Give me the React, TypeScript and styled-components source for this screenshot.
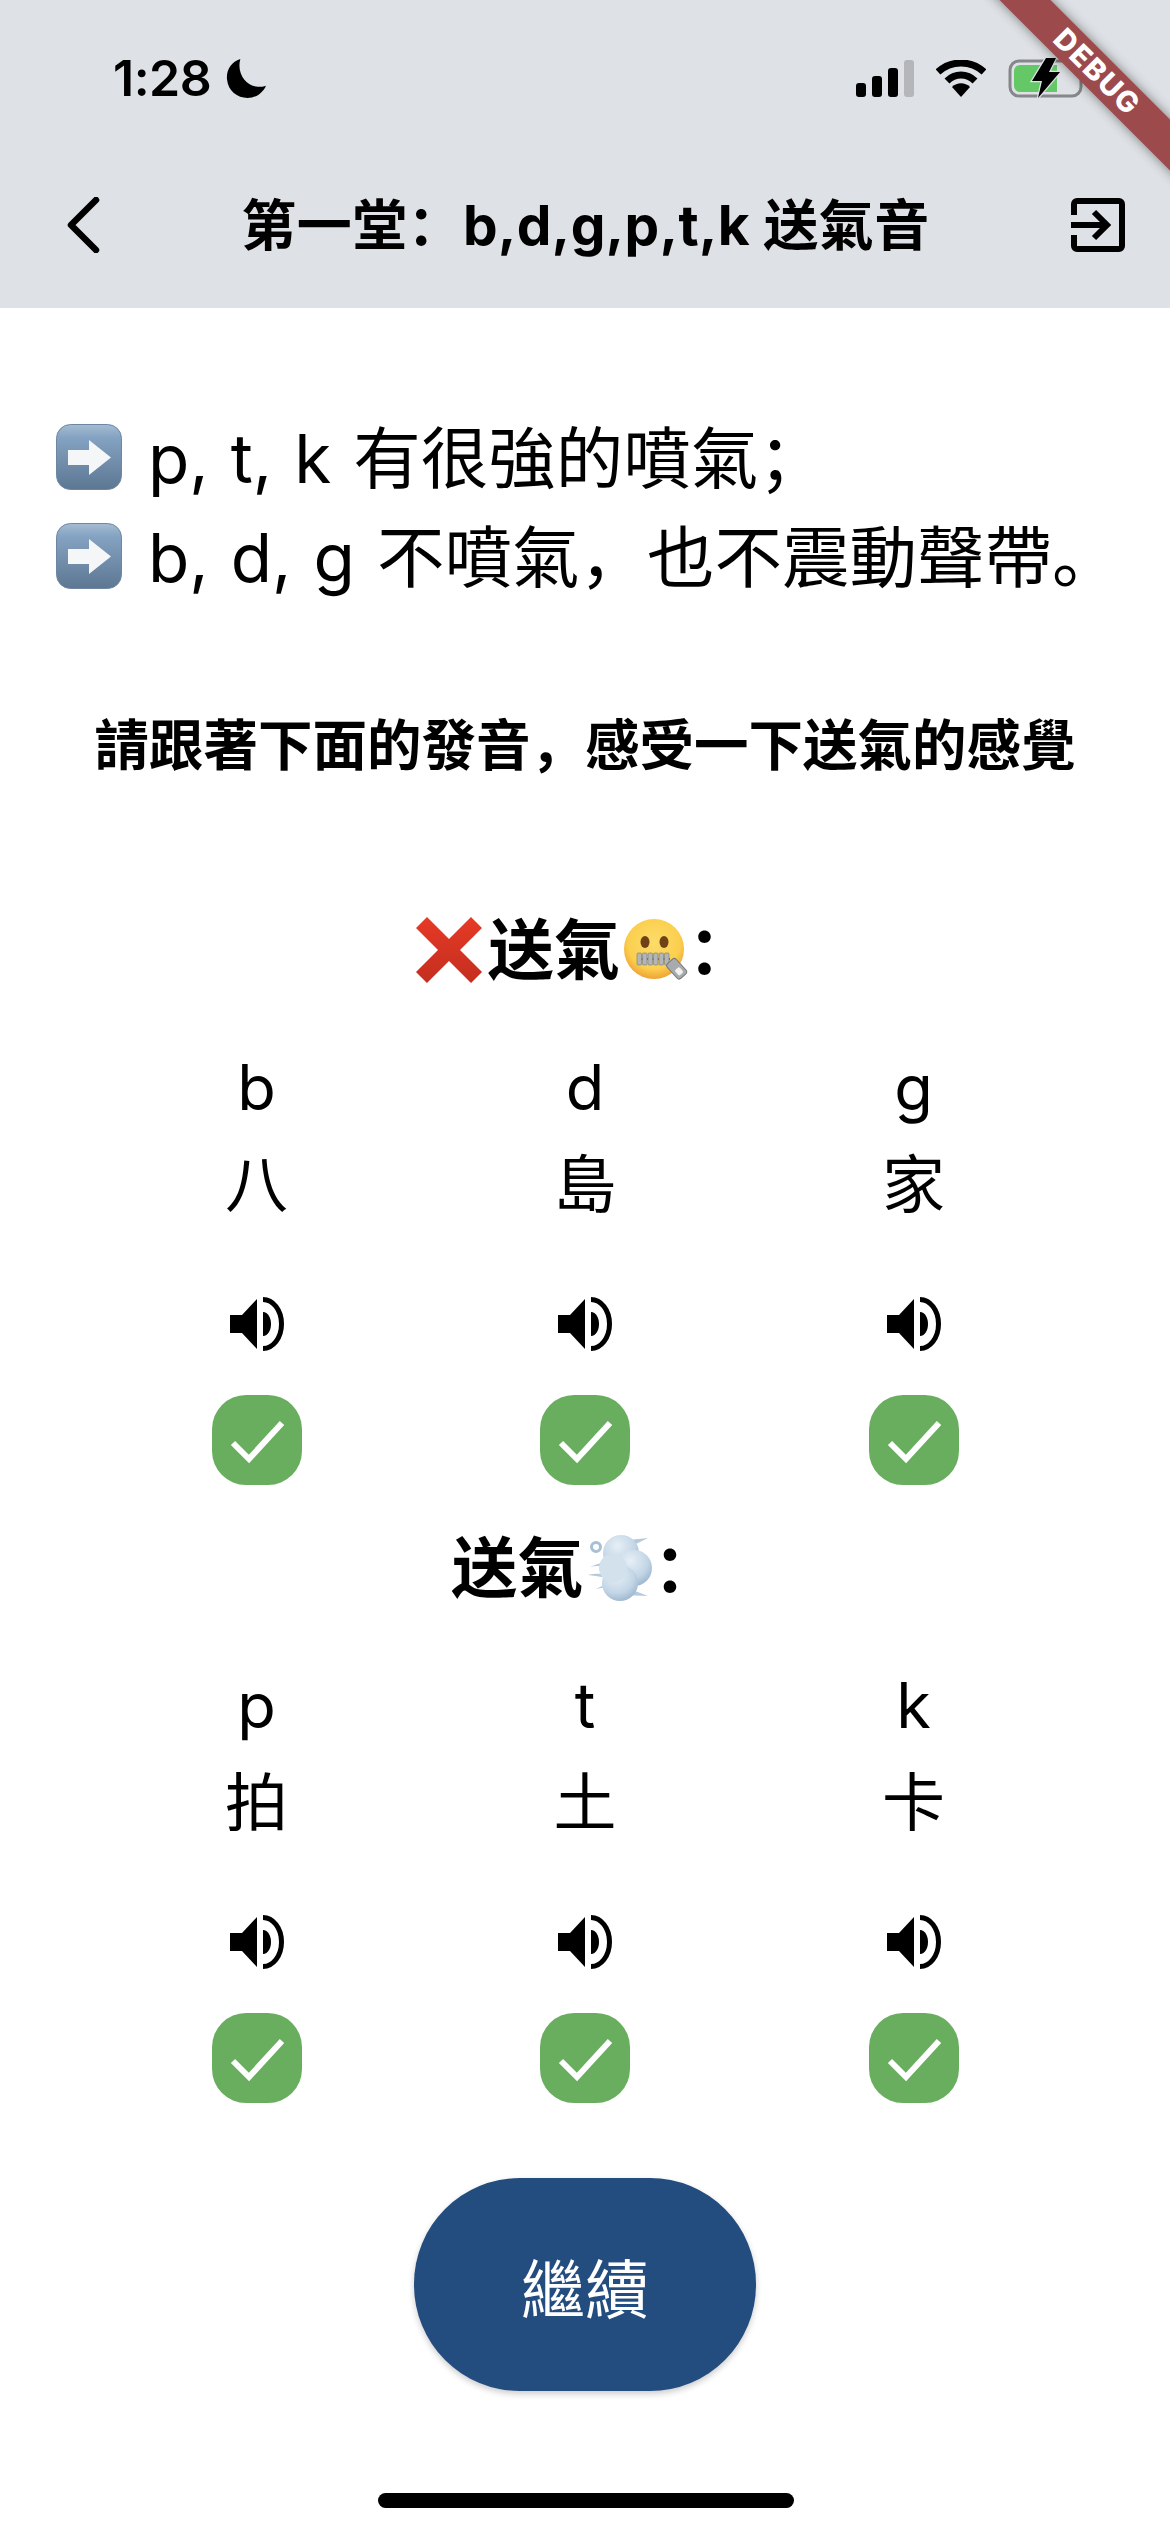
import React from 'react';
import styled, { createGlobalStyle } from 'styled-components';

const GlobalStyle = createGlobalStyle`
  html, body {
    margin: 0;
    padding: 0;
    background: #fff;
  }
`;

const FONT = `Inter, "Noto Sans CJK SC", "Liberation Sans", sans-serif`;

const Screen = styled.div`
  position: relative;
  width: 1170px;
  height: 2532px;
  overflow: hidden;
  display: flex;
  flex-direction: column;
  background: #fff;
  color: #000;
  font-family: ${FONT};
`;

const Header = styled.header`
  height: 308px;
  flex: none;
  background: #dee1e5;
  display: flex;
  flex-direction: column;
`;

const StatusBar = styled.div`
  height: 56px;
  margin-top: 50px;
  padding: 0 82px 0 113px;
  display: flex;
  align-items: center;
  justify-content: space-between;
`;

const Time = styled.div`
  display: flex;
  align-items: center;
  gap: 15px;
  font-size: 50px;
  font-weight: 600;
  letter-spacing: -0.5px;
`;

const StatusIcons = styled.div`
  display: flex;
  align-items: center;
  gap: 22px;
`;

const NavBar = styled.nav`
  height: 62px;
  margin-top: 88px;
  padding: 0 45px 0 67px;
  display: flex;
  align-items: center;
  justify-content: space-between;
`;

const NavTitle = styled.h1`
  margin: 0;
  font-size: 55px;
  font-weight: 700;
  letter-spacing: 0.4px;
  line-height: 62px;
  white-space: pre;
`;

const Ribbon = styled.div`
  position: absolute;
  left: 897px;
  top: 54px;
  width: 400px;
  height: 36px;
  transform: rotate(45deg);
  background: #9c4a4b;
  box-shadow: 0 0 12px rgba(0, 0, 0, 0.45);
  color: #fff;
  font-size: 29px;
  font-weight: 800;
  letter-spacing: 1.5px;
  line-height: 36px;
  text-align: center;
`;

const Intro = styled.section`
  padding: 99px 0 0 56px;
`;

const IntroLine = styled.div`
  height: 99px;
  display: flex;
  align-items: center;
  gap: 26px;
  font-size: 67.5px;
  word-spacing: 3px;
  white-space: pre;
`;

const IntroText = styled.span`
  margin-bottom: 6px;
`;

const Prompt = styled.p`
  margin: 105px 0 0;
  height: 70px;
  font-size: 54.5px;
  font-weight: 700;
  line-height: 70px;
  text-align: center;
`;

const Section = styled.section<{ $top: number }>`
  margin-top: ${(p) => p.$top}px;
`;

const SectionTitle = styled.h2<{ $shift?: number }>`
  margin: 0;
  height: 70px;
  padding-right: ${(p) => p.$shift ?? 0}px;
  display: flex;
  align-items: center;
  justify-content: center;
  font-size: 66px;
  font-weight: 700;
  line-height: 70px;
`;

const TitleColon = styled.span`
  width: 66px;
`;

const TitleWord = styled.span`
  margin: 0 4px 0 6px;
`;

const SoundGrid = styled.div`
  margin-top: 54px;
  display: grid;
  grid-template-columns: repeat(3, 328.5px);
  justify-content: center;
`;

const SoundCell = styled.div`
  display: flex;
  flex-direction: column;
  align-items: center;
`;

const Glyph = styled.div`
  height: 97px;
  font-size: 63px;
  line-height: 97px;
`;

const SpeakerButton = styled.div`
  margin-top: 64px;
  height: 52px;
  display: flex;
`;

const CheckBadge = styled.div`
  margin-top: 46px;
  width: 90px;
  height: 90px;
  border-radius: 34px;
  background: #69ae5f;
  display: flex;
`;

const ContinueButton = styled.button`
  align-self: center;
  margin-top: 75px;
  width: 342px;
  height: 213px;
  border: 0;
  padding: 0;
  border-radius: 106px;
  background: #234c7f;
  box-shadow: 0 3px 6px rgba(0, 0, 0, 0.2);
  color: #fff;
  font-family: ${FONT};
  font-size: 64px;
`;

const HomeBar = styled.div`
  position: absolute;
  left: 378px;
  top: 2493px;
  width: 416px;
  height: 15px;
  border-radius: 8px;
  background: #000;
`;

const Moon = () => (
  <svg width="41" height="41" viewBox="0 0 40 40">
    <path d="M14 1C5 4 0 12 1 21c1 11 10 18 20 18 8 0 15-5 18-12-2 1-5 1-8 1C20 28 10 15 14 1z" fill="#000" />
  </svg>
);

const Signal = () => (
  <svg width="58" height="37" viewBox="0 0 58 37">
    <rect x="0" y="23" width="10" height="14" rx="3" fill="#000" />
    <rect x="16" y="16" width="10" height="21" rx="3" fill="#000" />
    <rect x="32" y="8" width="10" height="29" rx="3" fill="#000" />
    <rect x="48" y="0" width="10" height="37" rx="3" fill="#b4b6ba" />
  </svg>
);

const Wifi = () => (
  <svg width="50" height="37" viewBox="0 0 50 37">
    <path d="M2 12C15 0 35 0 48 12" fill="none" stroke="#000" strokeWidth="7" />
    <path d="M11 21C19 13 31 13 39 21" fill="none" stroke="#000" strokeWidth="7" />
    <path d="M16 27c5-5 13-5 18 0L25 37z" fill="#000" />
  </svg>
);

const Battery = () => (
  <svg width="80" height="42" viewBox="0 0 80 42">
    <rect x="2" y="4" width="71" height="35" rx="9" fill="none" stroke="#85878b" strokeWidth="3" />
    <path d="M75 16c3 1 4 3 4 5s-1 4-4 5z" fill="#85878b" />
    <path d="M6 14a6 6 0 0 1 6-6h37v27H12a6 6 0 0 1-6-6z" fill="#64c866" />
    <path d="M38 1 L24 24 H34 L30 41 L52 15 H41 L48 1z" fill="#000" stroke="#dee1e5" strokeWidth="2.5" paintOrder="stroke" />
  </svg>
);

const Back = () => (
  <svg width="33" height="56" viewBox="0 0 33 56" style={{ display: 'block' }}>
    <path d="M29 3 4 28l25 25" fill="none" stroke="#000" strokeWidth="6.5" strokeLinecap="round" strokeLinejoin="round" />
  </svg>
);

const Exit = () => (
  <svg width="54" height="54" viewBox="0 0 54 54" style={{ display: 'block' }}>
    <path d="M3 17V6a3 3 0 0 1 3-3h42a3 3 0 0 1 3 3v42a3 3 0 0 1-3 3H6a3 3 0 0 1-3-3V37" fill="none" stroke="#000" strokeWidth="6" />
    <path d="M0 27h36M23 14l13 13-13 13" fill="none" stroke="#000" strokeWidth="6" />
  </svg>
);

const ArrowEmoji = () => (
  <svg width="66" height="66" viewBox="0 0 66 66">
    <defs>
      <linearGradient id="arrowBox" x1="0" y1="0" x2="0" y2="1">
        <stop offset="0" stopColor="#a6bcd2" />
        <stop offset="0.2" stopColor="#84a2c2" />
        <stop offset="1" stopColor="#5d7792" />
      </linearGradient>
    </defs>
    <rect x="0.5" y="0.5" width="65" height="65" rx="14" fill="url(#arrowBox)" stroke="#6d87a3" />
    <path d="M12 26h21V16l22 17.500-22 17.500V41H12z" fill="#f4f6f8" />
  </svg>
);

const CrossEmoji = () => (
  <svg width="66" height="66" viewBox="0 0 66 66">
    <defs>
      <linearGradient id="crossRed" x1="0" y1="0" x2="0" y2="1">
        <stop offset="0" stopColor="#e63a26" />
        <stop offset="1" stopColor="#c42e1f" />
      </linearGradient>
    </defs>
    <path d="M11 0 33 22 55 0 66 11 44 33 66 55 55 66 33 44 11 66 0 55 22 33 0 11z" fill="url(#crossRed)" />
  </svg>
);

const ZipperEmoji = () => (
  <svg width="64" height="64" viewBox="0 0 64 64">
    <defs>
      <radialGradient id="faceSkin" cx="0.5" cy="0.4" r="0.62">
        <stop offset="0" stopColor="#fddc6a" />
        <stop offset="0.7" stopColor="#fbcf4e" />
        <stop offset="1" stopColor="#ee9d30" />
      </radialGradient>
    </defs>
    <circle cx="30" cy="31" r="30" fill="url(#faceSkin)" />
    <ellipse cx="21" cy="24" rx="4.500" ry="6" fill="#6f4216" />
    <ellipse cx="40" cy="24" rx="4.500" ry="6" fill="#6f4216" />
    <rect x="13" y="40" width="33" height="2" fill="#6d6f72" />
    {[13, 18.500, 24, 29.500, 35, 40.500].map((x) => (
      <rect key={x} x={x} y={35} width="4.500" height="12" rx="1" fill="#b4b5b7" stroke="#77797c" strokeWidth="0.6" />
    ))}
    <g transform="rotate(-42 52 50)">
      <rect x="46" y="41" width="12" height="20" rx="3" fill="#a8aaad" stroke="#77797c" />
      <rect x="49" y="51" width="6" height="7" rx="1.500" fill="#f0f0f0" />
    </g>
  </svg>
);

const DashEmoji = () => (
  <svg width="66" height="70" viewBox="0 0 66 70">
    <defs>
      <radialGradient id="puff" cx="0.4" cy="0.3" r="0.8">
        <stop offset="0" stopColor="#e6eff6" />
        <stop offset="0.6" stopColor="#c3d6e6" />
        <stop offset="1" stopColor="#93aec8" />
      </radialGradient>
    </defs>
    <path d="M30 8 60 5 42 14zM36 62l24 1-18-7z" fill="#b6cadb" />
    <path d="M2 34c8-4 14-4 24-6v6C16 34 9 32 2 34zM0 42c9-2 16-1 26 0v4C16 44 8 43 0 42zM8 56c6-3 12-6 18-8l2 3c-6 2-13 4-20 5z" fill="#b4c9da" />
    <circle cx="8" cy="14" r="4.500" fill="none" stroke="#a8c0d4" strokeWidth="3" />
    <circle cx="33" cy="20" r="18" fill="url(#puff)" />
    <circle cx="46" cy="35" r="18" fill="url(#puff)" />
    <circle cx="32" cy="50" r="18" fill="url(#puff)" />
    <circle cx="25" cy="35" r="14" fill="#d3e1ec" />
  </svg>
);

const Speaker = () => (
  <svg width="54" height="54" viewBox="0 0 54 54" style={{ display: 'block' }}>
    <path d="M0 18h12L27 2v50L12 36H0z" fill="#000" />
    <path d="M33 15c5 0 8 6 8 12s-3 12-8 12z" fill="#000" />
    <path d="M33 2.500C43 2.500 51.500 13 51.500 27S43 51.500 33 51.500" fill="none" stroke="#000" strokeWidth="5" />
  </svg>
);

const Check = () => (
  <svg width="90" height="90" viewBox="0 0 90 90">
    <path d="M21 48 37 64 70 28" fill="none" stroke="#fff" strokeWidth="6" />
  </svg>
);

type Sound = { latin: string; han: string };

const SOUNDS_FLAT: Sound[] = [
  { latin: 'b', han: '八' },
  { latin: 'd', han: '島' },
  { latin: 'g', han: '家' },
];

const SOUNDS_ASPIRATED: Sound[] = [
  { latin: 'p', han: '拍' },
  { latin: 't', han: '土' },
  { latin: 'k', han: '卡' },
];

const SoundRow = ({ sounds }: { sounds: Sound[] }) => (
  <SoundGrid>
    {sounds.map((s) => (
      <SoundCell key={s.latin}>
        <Glyph>{s.latin}</Glyph>
        <Glyph>{s.han}</Glyph>
        <SpeakerButton>
          <Speaker />
        </SpeakerButton>
        <CheckBadge>
          <Check />
        </CheckBadge>
      </SoundCell>
    ))}
  </SoundGrid>
);

export default function App() {
  return (
    <Screen>
      <GlobalStyle />
      <Header>
        <StatusBar>
          <Time>
            1:28
            <Moon />
          </Time>
          <StatusIcons>
            <Signal />
            <Wifi />
            <Battery />
          </StatusIcons>
        </StatusBar>
        <NavBar>
          <Back />
          <NavTitle>第一堂：b,d,g,p,t,k 送氣音</NavTitle>
          <Exit />
        </NavBar>
      </Header>
      <Intro>
        <IntroLine>
          <ArrowEmoji />
          <IntroText>p, t, k 有很強的噴氣；</IntroText>
        </IntroLine>
        <IntroLine>
          <ArrowEmoji />
          <IntroText>b, d, g 不噴氣，也不震動聲帶。</IntroText>
        </IntroLine>
      </Intro>
      <Prompt>請跟著下面的發音，感受一下送氣的感覺</Prompt>
      <Section $top={135}>
        <SectionTitle>
          <CrossEmoji />
          <TitleWord>送氣</TitleWord>
          <ZipperEmoji />
          <TitleColon>：</TitleColon>
        </SectionTitle>
        <SoundRow sounds={SOUNDS_FLAT} />
      </Section>
      <Section $top={48}>
        <SectionTitle $shift={5}>
          <TitleWord>送氣</TitleWord>
          <DashEmoji />
          <TitleColon>：</TitleColon>
        </SectionTitle>
        <SoundRow sounds={SOUNDS_ASPIRATED} />
      </Section>
      <ContinueButton>繼續</ContinueButton>
      <HomeBar />
      <Ribbon>DEBUG</Ribbon>
    </Screen>
  );
}
